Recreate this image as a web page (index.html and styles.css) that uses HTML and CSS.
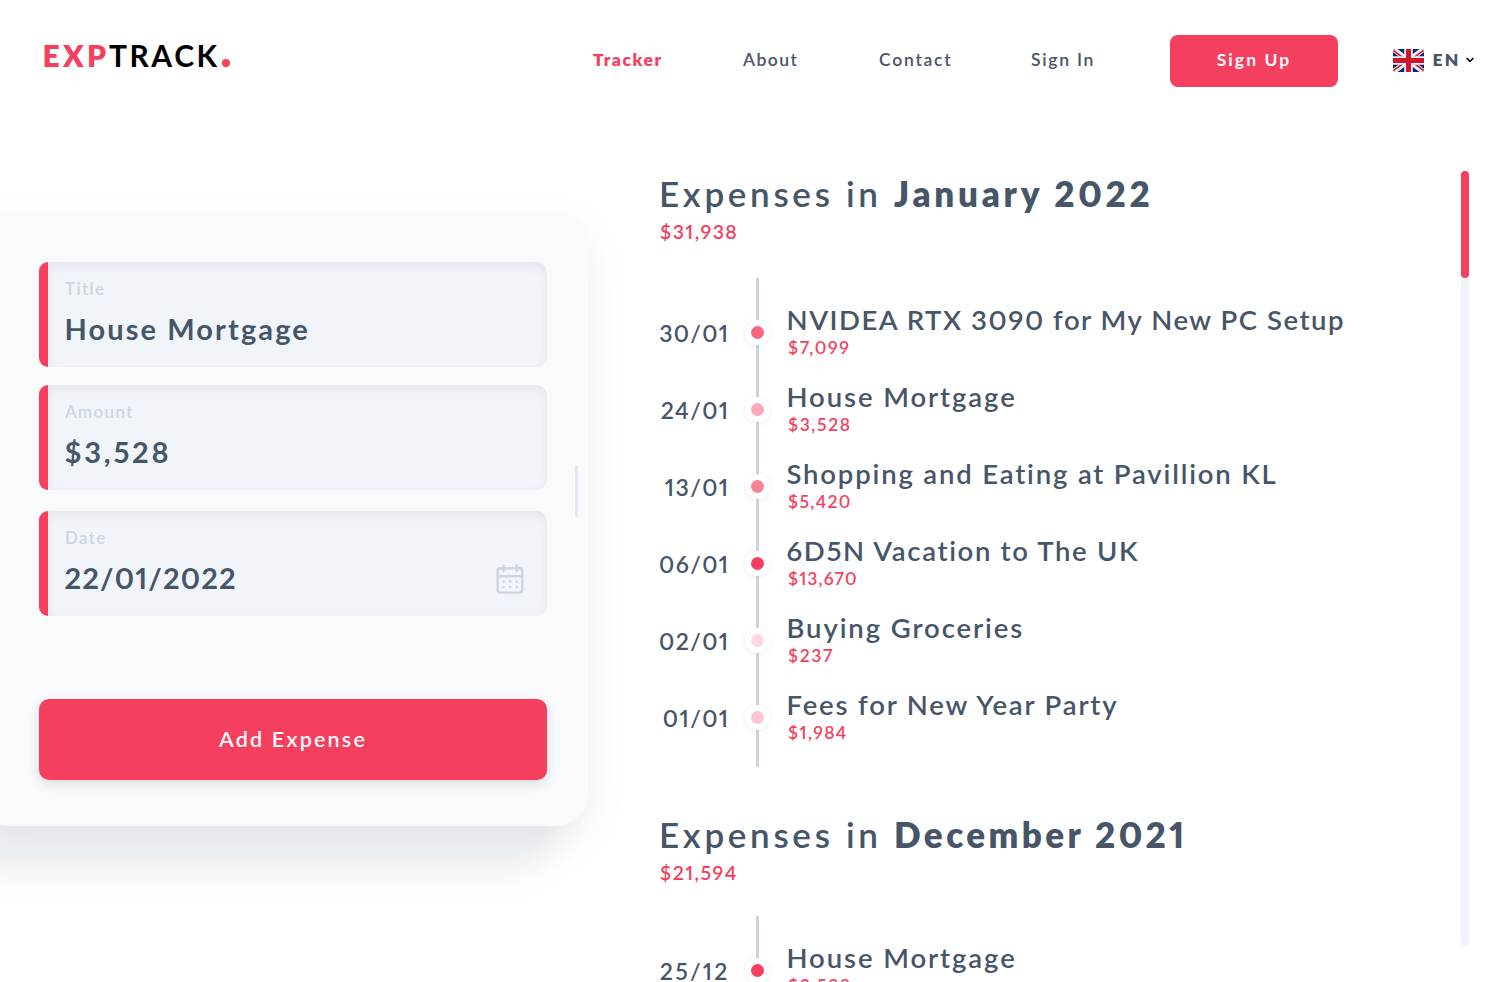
FILE: index.html
```
<!DOCTYPE html>
<html lang="en">
<head>
<meta charset="utf-8">
<title>Exptrack</title>
<link rel="stylesheet" href="styles.css">
</head>
<body>
<header class="header">
  <a class="logo"><span class="logo-a">EXP</span><span class="logo-b">TRACK</span><span class="logo-dot"></span></a>
  <nav class="nav">
    <a class="nav-link active">Tracker</a>
    <a class="nav-link tight">About</a>
    <a class="nav-link">Contact</a>
    <a class="nav-link">Sign In</a>
  </nav>
  <button class="signup">Sign Up</button>
  <div class="lang">
    <svg class="flag" viewBox="0 0 31 23">
      <rect width="31" height="23" fill="#00247d"/>
      <path d="M0 0L31 23M31 0L0 23" stroke="#f0f0f0" stroke-width="5.4"/>
      <path d="M0 1.2L13 10.8M31 21.8L18 12.2M31 1L18 10.6M0 22L13 12.4" stroke="#cf142b" stroke-width="1.5"/>
      <path d="M15.5 0V23M0 11.5H31" stroke="#f0f0f0" stroke-width="8.6"/>
      <path d="M15.5 0V23M0 11.5H31" stroke="#cf142b" stroke-width="5"/>
    </svg>
    <span class="lang-code">EN</span>
    <svg class="chevron" viewBox="0 0 8 6"><path d="M.6 1L4 4.4L7.4 1" fill="none" stroke="#000" stroke-width="1.5"/></svg>
  </div>
</header>
<main class="main">
  <section class="entry">
    <form class="card">
      <div class="field"><span class="label">Title</span><span class="value">House Mortgage</span></div>
      <div class="field"><span class="label">Amount</span><span class="value value-money">$3,528</span></div>
      <div class="field date-field"><span class="label">Date</span><span class="value value-date">22/01/2022</span>
        <svg class="calendar" viewBox="0 0 28 30" fill="none" stroke="#cbd5e1" stroke-width="2.4">
          <rect x="1.7" y="4.2" width="24.6" height="24.4" rx="2.8"/>
          <path d="M2 12.2H26"/><path d="M7.5 1.5V7M20.5 1.5V7" stroke-linecap="round"/>
          <path d="M7.5 17.6h.01M14 17.6h.01M20.5 17.6h.01M7.5 23h.01M14 23h.01M20.5 23h.01" stroke-linecap="round" stroke-width="2.7"/>
        </svg>
      </div>
      <button class="add" type="button">Add Expense</button>
      <i class="handle"></i>
    </form>
  </section>
  <section class="expenses">
    <h2 class="month">Expenses in <b>January 2022</b></h2>
    <p class="total">$31,938</p>
    <div class="timeline">
      <div class="row"><time class="date">30/01</time><i class="dot d4"></i><div class="item"><span class="name name-caps">NVIDEA RTX 3090 for My New PC Setup</span><span class="price">$7,099</span></div></div>
      <div class="row"><time class="date">24/01</time><i class="dot d2"></i><div class="item"><span class="name">House Mortgage</span><span class="price">$3,528</span></div></div>
      <div class="row"><time class="date">13/01</time><i class="dot d3"></i><div class="item"><span class="name name-long">Shopping and Eating at Pavillion KL</span><span class="price price-tight">$5,420</span></div></div>
      <div class="row"><time class="date">06/01</time><i class="dot"></i><div class="item"><span class="name name-mixed">6D5N Vacation to The UK</span><span class="price price-tighter">$13,670</span></div></div>
      <div class="row"><time class="date">02/01</time><i class="dot d0"></i><div class="item"><span class="name">Buying Groceries</span><span class="price">$237</span></div></div>
      <div class="row"><time class="date">01/01</time><i class="dot d1"></i><div class="item"><span class="name name-long">Fees for New Year Party</span><span class="price price-tight">$1,984</span></div></div>
    </div>
    <h2 class="month month-long">Expenses in <b>December 2021</b></h2>
    <p class="total total-later">$21,594</p>
    <div class="timeline">
      <div class="row"><time class="date date-wide">25/12</time><i class="dot"></i><div class="item"><span class="name">House Mortgage</span><span class="price">$3,528</span></div></div>
    </div>
  </section>
  <div class="scrollbar"><div class="thumb"></div></div>
</main>
</body>
</html>
```
FILE: styles.css
```
* { box-sizing: border-box; }
body { margin: 0; height: 982px; overflow: hidden; background: #fff; color: #475569; font-family: Lato, "Open Sans", sans-serif; font-feature-settings: "pnum"; }
button { border: 0; padding: 0; color: #f8fafc; background: #f43f5e; font-family: inherit; font-feature-settings: inherit; }

.header { display: flex; align-items: center; height: 121px; padding-left: 42.5px; }
.logo { display: flex; align-items: baseline; width: 550.5px; padding-bottom: 11px; font-size: 30px; line-height: 36px; font-weight: 700; color: #000; }
.logo-a { color: #f43f5e; font-weight: 800; letter-spacing: 3.3px; }
.logo-b { margin-left: -.5px; letter-spacing: 2.6px; }
.logo-dot { width: 8px; height: 8px; margin-left: 2px; border-radius: 50%; background: #f43f5e; }
.nav { display: grid; grid-template-columns: 150px 136px 152px 139px; padding-bottom: 1px; font-size: 17.5px; line-height: 20px; font-weight: 600; letter-spacing: 1.75px; }
.tight { letter-spacing: 1.48px; }
.active { color: #f43f5e; font-weight: 800; letter-spacing: 1.6px; }
.signup { width: 168px; height: 52px; padding-bottom: 1px; border-radius: 8px; font-size: 17.5px; line-height: 20px; font-weight: 700; letter-spacing: 2.1px; }
.lang { display: flex; align-items: center; margin-left: 55px; }
.flag { width: 31px; height: 23px; border-radius: 3px; }
.lang-code { margin-left: 8.5px; padding-bottom: 1px; font-size: 17.5px; line-height: 20px; font-weight: 800; letter-spacing: 2.2px; }
.chevron { width: 8px; height: 6px; margin: 0 0 1px 5px; }

.main { display: grid; grid-template-columns: 655px 806px 8px; height: 861px; }
.entry { padding-top: 89px; }
.card { position: relative; display: flex; flex-direction: column; width: 612px; height: 616px; margin-left: -24px; padding: 52px 41px 0 63px; border-radius: 32px; background: #f8fafc; box-shadow: 0 16px 44px rgba(0,0,0,.07); }
.card::before { content: ""; position: absolute; z-index: -1; left: -40px; right: 41px; bottom: -29px; height: 120px; border-radius: 32px; background: #f1f5f9; box-shadow: 0 12px 44px rgba(0,0,0,.08); }
.field { display: flex; flex-direction: column; height: 105px; margin-bottom: 18px; padding: 16.5px 0 0 17px; border-left: 9px solid #f43f5e; border-radius: 9px 11px 11px 9px; background: #f1f5f9; box-shadow: inset 0 4px 12px rgba(0,0,0,.06); }
.label { font-size: 17px; line-height: 20px; font-weight: 600; letter-spacing: 1.35px; color: #cbd5e1; }
.value { margin: 13.5px 0 0 -.5px; font-size: 29px; line-height: 34px; font-weight: 700; letter-spacing: 2.1px; }
.value-money { letter-spacing: 2.8px; }
.value-date { letter-spacing: 1.15px; }
.date-field { position: relative; margin: 3px 0 83px; }
.calendar { position: absolute; right: 23px; top: 53px; width: 28px; height: 30px; }
.add { height: 81px; padding-bottom: 1px; border-radius: 10px; font-size: 21.5px; line-height: 26px; font-weight: 600; letter-spacing: 2.2px; box-shadow: 0 4px 12px rgba(0,0,0,.12); }
.handle { position: absolute; right: 10px; top: 255px; width: 3px; height: 52px; border-radius: 2px; background: #e5e9ef; }

.expenses { padding: 51px 0 0 4px; overflow: hidden; }
.month { margin: 0; font-size: 35px; line-height: 42px; font-weight: 600; letter-spacing: 3.68px; white-space: nowrap; }
.month b { font-weight: 800; letter-spacing: 3.75px; }
.month-long b { letter-spacing: 3.4px; }
.total { margin: 6px 0 34px 1px; font-size: 19.5px; line-height: 24px; font-weight: 600; letter-spacing: 1.45px; color: #f43f5e; }
.total-later { margin-bottom: 31px; }
.timeline { position: relative; height: 489px; margin-bottom: 46px; padding-top: 16px; }
.timeline::before { content: ""; position: absolute; left: 97px; top: 0; width: 3px; height: 100%; background: #cbd5e1; }
.row { position: relative; display: grid; grid-template-columns: 69px 59px 1fr; height: 77px; align-items: center; }
.date { justify-self: end; margin-right: -1.5px; font-size: 23px; line-height: 28px; font-weight: 600; letter-spacing: 1.4px; }
.date-wide { letter-spacing: 2.2px; }
.dot { justify-self: center; width: 25px; height: 25px; border: 6px solid #fff; border-radius: 50%; background: #f43f5e; box-shadow: 0 1px 6px rgba(0,0,0,.08); }
.d0 { background: #fcd9df; }
.d1 { background: #fcc5cf; }
.d2 { background: #faa9b7; }
.d3 { background: #f88296; }
.d4 { background: #f7657e; }
.item { align-self: start; display: flex; flex-direction: column; padding-top: 10px; }
.name { margin-left: -.5px; font-size: 27.5px; line-height: 32px; font-weight: 600; letter-spacing: 1.9px; white-space: nowrap; }
.name-caps { letter-spacing: 1.53px; }
.name-mixed { letter-spacing: 1.66px; }
.name-long { letter-spacing: 1.82px; }
.price { margin: 1.5px 0 0 1px; font-size: 17.5px; line-height: 20px; font-weight: 600; letter-spacing: 1.6px; color: #f43f5e; }
.price-tight { letter-spacing: 1.38px; }
.price-tighter { letter-spacing: 1.1px; }
.scrollbar { height: 775px; margin-top: 50px; border-radius: 4px; background: #f1f5f9; }
.thumb { height: 107px; border-radius: 4px; background: #f43f5e; }
```
